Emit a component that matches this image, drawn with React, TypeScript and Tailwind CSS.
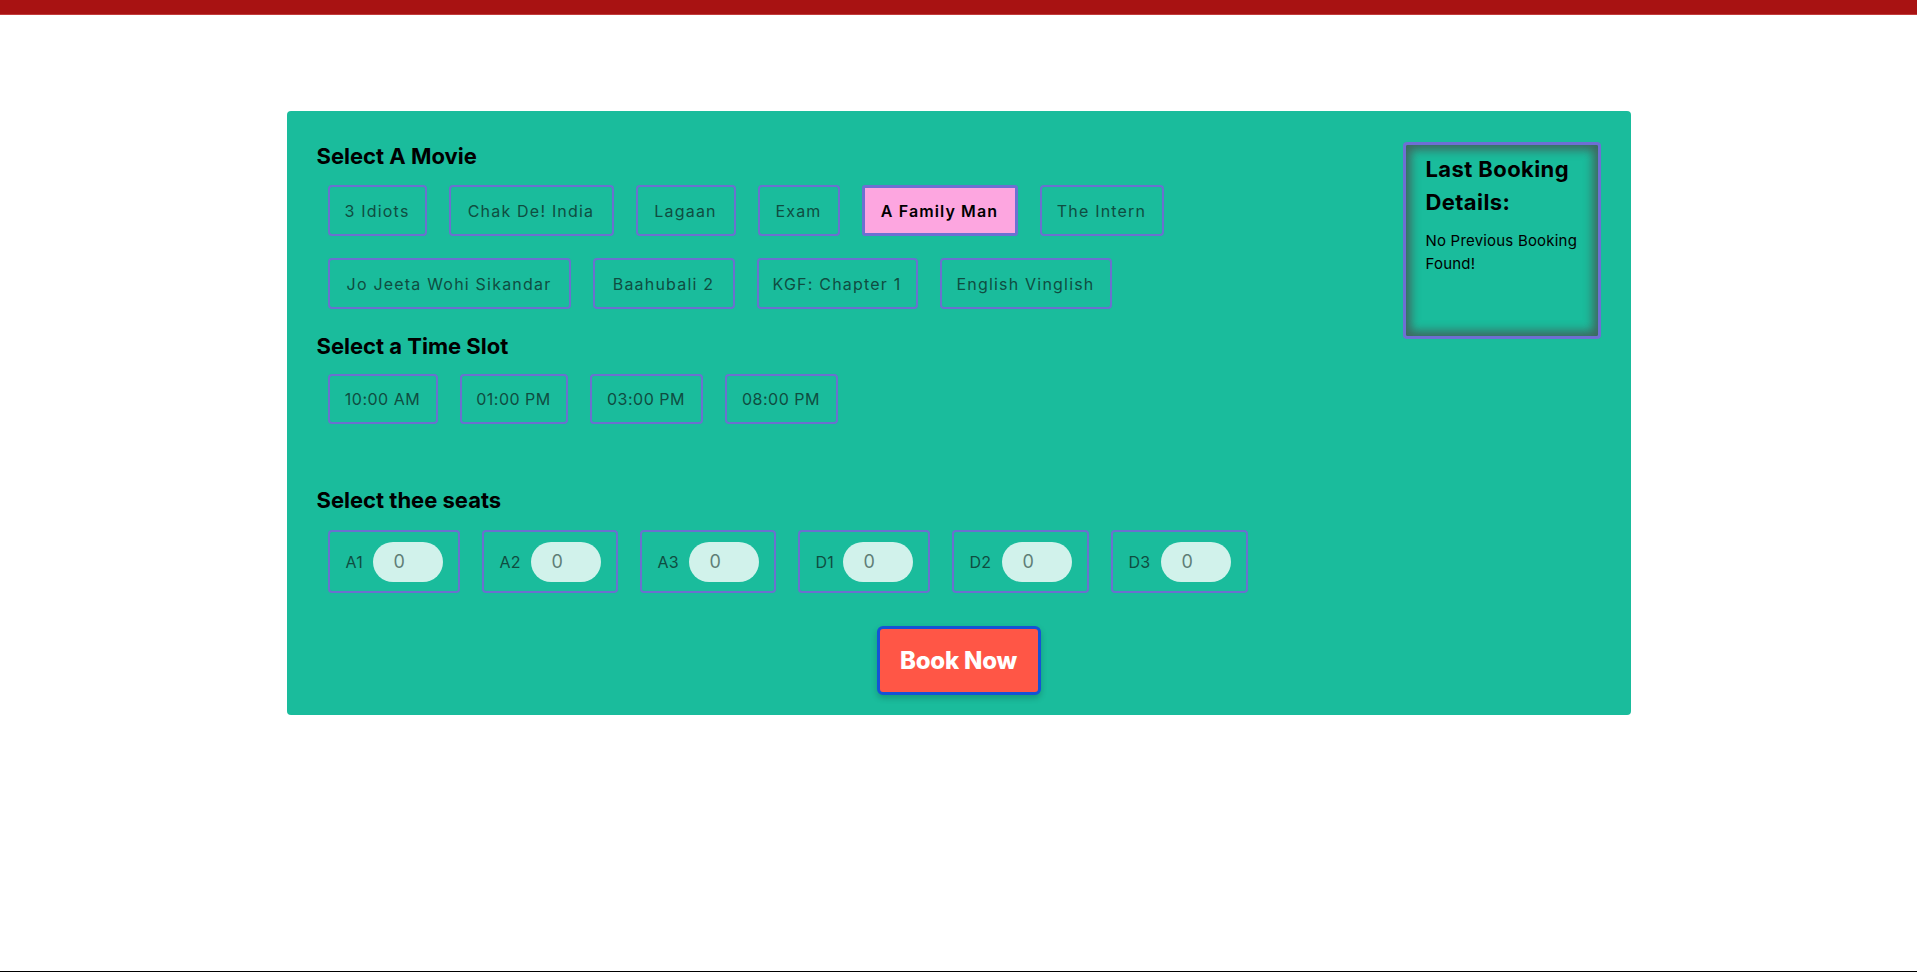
import React from "react";

const row1 = [
  { name: "3 Idiots", w: "w-[99px]" },
  { name: "Chak De! India", w: "w-[165px]" },
  { name: "Lagaan", w: "w-[100px]" },
  { name: "Exam", w: "w-[82px]" },
  { name: "A Family Man", w: "w-[156px]", selected: true },
  { name: "The Intern", w: "w-[124px]" },
];
const row2 = [
  { name: "Jo Jeeta Wohi Sikandar", w: "w-[243px]" },
  { name: "Baahubali 2", w: "w-[142px]" },
  { name: "KGF: Chapter 1", w: "w-[161px]" },
  { name: "English Vinglish", w: "w-[172px]" },
];
const slots = [
  { name: "10:00 AM", w: "w-[110px]" },
  { name: "01:00 PM", w: "w-[108px]" },
  { name: "03:00 PM", w: "w-[113px]" },
  { name: "08:00 PM", w: "w-[113px]" },
];
const seats = [
  { name: "A1", w: "w-[132px]" },
  { name: "A2", w: "w-[136px]" },
  { name: "A3", w: "w-[136px]" },
  { name: "D1", w: "w-[132px]" },
  { name: "D2", w: "w-[137px]" },
  { name: "D3", w: "w-[137px]" },
];

function Btn({
  name,
  w,
  selected,
  h = "h-[51px]",
  track = "tracking-[1.2px]",
}: {
  name: string;
  w: string;
  selected?: boolean;
  h?: string;
  track?: string;
}) {
  return selected ? (
    <div
      className={`${w} ${h} flex items-center justify-center rounded-[3px] border-[3px] border-[#6c70d2] bg-[#fda6e0] text-[16px] font-semibold tracking-[1.1px] text-black`}
    >
      {name}
    </div>
  ) : (
    <div
      className={`${w} ${h} flex items-center justify-center rounded-[4px] border-2 border-[#6b70cf] text-[16px] font-normal ${track} text-[#0f4d41]`}
    >
      {name}
    </div>
  );
}

export default function App() {
  return (
    <div className="w-full h-[972px] bg-white flex flex-col font-['Inter','Noto_Sans',sans-serif]">
      <div className="h-[15px] shrink-0 bg-[#a81212] border-b border-[#c23b3b]" />
      <div className="flex-1 border-b border-black">
        <div className="mx-auto mt-[96px] w-[1344px] h-[604px] bg-[#1abc9c] rounded-[4px] flex flex-col px-[30px] pt-[29px]">
          <div className="flex justify-between">
            <div className="flex flex-col">
              <h2 className="h-[33px] leading-[33px] text-[22px] font-bold text-black">Select A Movie</h2>
              <div className="mt-[12px] pl-[11px] flex flex-col gap-[22px]">
                <div className="flex gap-[22px]">
                  {row1.map((m) => (
                    <Btn key={m.name} {...m} />
                  ))}
                </div>
                <div className="flex gap-[22px]">
                  {row2.map((m) => (
                    <Btn key={m.name} {...m} />
                  ))}
                </div>
              </div>
              <h2 className="mt-[21px] h-[33px] leading-[33px] text-[22px] font-bold text-black">Select a Time Slot</h2>
              <div className="mt-[11px] pl-[11px] flex gap-[22px]">
                {slots.map((s) => (
                  <Btn key={s.name} {...s} h="h-[50px]" track="tracking-[0.5px]" />
                ))}
              </div>
              <h2 className="mt-[60px] h-[33px] leading-[33px] text-[22px] font-bold text-black">Select thee seats</h2>
              <div className="mt-[13px] pl-[11px] flex gap-[22px]">
                {seats.map((s) => (
                  <div
                    key={s.name}
                    className={`${s.w} h-[63px] flex items-center justify-between pl-[16px] pr-[15px] rounded-[4px] border-2 border-[#6b70cf]`}
                  >
                    <span className="text-[16px] tracking-[0.3px] text-[#0f4d41]">{s.name}</span>
                    <div className="w-[70px] h-[40px] rounded-full bg-[#d1f2eb] flex items-center pl-[21px] text-[18px] text-[#5f7e77]">
                      0
                    </div>
                  </div>
                ))}
              </div>
            </div>
            <div className="mt-[2px] w-[198px] h-[197px] shrink-0 rounded-[4px] border-[3px] border-[#6e6fd4] shadow-[inset_0_0_10px_5px_rgba(75,75,75,0.75)] pl-[20px] pt-[8px] pr-[4px]">
              <div className="text-[22px] leading-[33px] font-bold tracking-[0.4px] text-black">
                Last Booking
                <br />
                Details:
              </div>
              <div className="mt-[10px] text-[15px] leading-[23px] tracking-[0.2px] text-black">
                No Previous Booking
                <br />
                Found!
              </div>
            </div>
          </div>
          <div className="flex justify-center mt-[33px]">
            <button className="w-[164px] h-[69px] rounded-[6px] border-[3px] border-[#1453d6] bg-[#ff5646] text-white text-[24px] font-extrabold tracking-[-0.2px] shadow-[0_3px_6px_rgba(0,0,0,0.2)]">
              Book Now
            </button>
          </div>
        </div>
      </div>
    </div>
  );
}
